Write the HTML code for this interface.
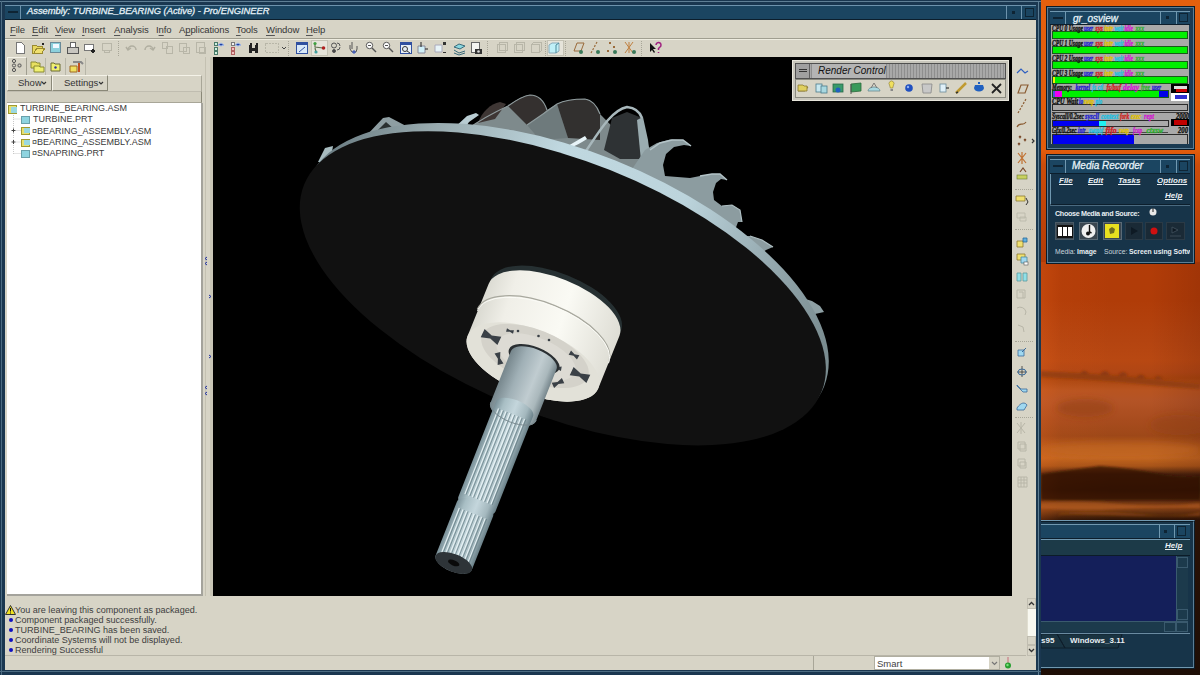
<!DOCTYPE html>
<html><head><meta charset="utf-8">
<style>
*{margin:0;padding:0;box-sizing:border-box}
html,body{width:1200px;height:675px;overflow:hidden;position:relative;font-family:"Liberation Sans",sans-serif;background:#000}
.a{position:absolute}
.t{position:absolute;white-space:nowrap;line-height:1}
#desk{left:1041px;top:0;width:159px;height:675px;background:linear-gradient(180deg,#d85c10 0%,#d45a12 40%,#c8601a 55%,#b65a1e 64%,#a85218 70%,#7a3410 76%,#3a1a08 80%,#2a1006 100%)}
#pe{left:0;top:0;width:1041px;height:675px;background:#1a3750}
.beige{background:#d7d4c6}
.menu{font-size:9.5px;letter-spacing:-0.1px;color:#363636;top:25px}
.menu u{text-decoration:underline;text-underline-offset:1.5px;text-decoration-color:#555}
.tree{font-size:9px;color:#3a3a3a}
.msg{font-size:9.05px;color:#3e3e3e;left:15px}
.bul{position:absolute;left:9px;width:4px;height:4px;border-radius:2px;background:#1010c0}
.mm{font-size:8px;font-style:italic;font-weight:bold;color:#e8eef2;text-decoration:underline}
.sep{position:absolute;width:1px;border-left:1px dotted #a8a698}
</style></head><body>
<div id="pe" class="a"></div>
<!-- outer frame highlight lines -->
<div class="a" style="left:0;top:1px;width:1041px;height:1px;background:#5f7f95"></div>
<div class="a" style="left:1px;top:1px;width:1px;height:674px;background:#4c6c82"></div>
<div class="a" style="left:1038px;top:1px;width:1px;height:674px;background:#5f7f95"></div>
<div class="a" style="left:0;top:671px;width:1041px;height:1px;background:#4c6c82"></div>
<!-- title bar -->
<div class="a" style="left:5px;top:5px;width:1031px;height:15px;background:#1b4561;border-top:1px solid #6d93ad;border-bottom:1px solid #0c1e2c"></div>
<div class="a" style="left:20px;top:5px;width:1px;height:14px;background:#6d93ad"></div>
<div class="a" style="left:8px;top:11px;width:10px;height:2px;background:#0e2434"></div>
<div class="a" style="left:1006px;top:5px;width:1px;height:14px;background:#6d93ad"></div>
<div class="a" style="left:1021px;top:5px;width:1px;height:14px;background:#6d93ad"></div>
<div class="a" style="left:1012px;top:11px;width:3px;height:3px;background:#0e2434"></div>
<div class="a" style="left:1025px;top:8px;width:9px;height:9px;border:1px solid #0e2434"></div>
<div class="t" style="left:27px;top:7px;font-size:9.35px;font-style:italic;color:#f2f8fc;-webkit-text-stroke:0.3px #dfeaf2">Assembly: TURBINE_BEARING (Active) - Pro/ENGINEER</div>
<!-- client -->
<div class="a beige" style="left:5px;top:20px;width:1031px;height:650px"></div>
<!-- menubar -->
<div class="t menu" style="left:10px"><u>F</u>ile</div>
<div class="t menu" style="left:32px"><u>E</u>dit</div>
<div class="t menu" style="left:55px"><u>V</u>iew</div>
<div class="t menu" style="left:82px"><u>I</u>nsert</div>
<div class="t menu" style="left:114px"><u>A</u>nalysis</div>
<div class="t menu" style="left:156px">I<u>n</u>fo</div>
<div class="t menu" style="left:179px">A<u>p</u>plications</div>
<div class="t menu" style="left:236px"><u>T</u>ools</div>
<div class="t menu" style="left:266px"><u>W</u>indow</div>
<div class="t menu" style="left:306px"><u>H</u>elp</div>
<div class="a" style="left:5px;top:38px;width:1031px;height:1px;background:#a09e90"></div>
<div class="a" style="left:5px;top:39px;width:1031px;height:1px;background:#eeece0"></div>
<!-- toolbar -->
<div class="a" style="left:311px;top:40px;width:17px;height:16px;background:#e6e4da;border:1px solid #c4c2b4"></div>
<div class="a" style="left:547px;top:40px;width:17px;height:16px;background:#e6e4da;border:1px solid #c4c2b4"></div>
<svg class="a" style="left:0;top:39px" width="700" height="18" viewBox="0 39 700 18">
<g stroke-width="1" shape-rendering="crispEdges">
<path d="M16.5 42.5h5l3 3v8h-8z" fill="#fff" stroke="#777"/>
<path d="M32.5 45.5h4l1 1h5v7h-10z" fill="#e8d860" stroke="#9a8a30"/>
<path d="M34 53l3-5h8l-3 5z" fill="#f0e070" stroke="#9a8a30"/>
<circle cx="43" cy="44" r="1.5" fill="#222"/>
<rect x="50.5" y="42.5" width="10" height="10" fill="#8cd0dc" stroke="#6a8a98"/>
<rect x="52.5" y="43.5" width="6" height="4" fill="#f0f8ff" stroke="none"/>
<rect x="67.5" y="47.5" width="11" height="6" fill="#c8c6c0" stroke="#555"/>
<rect x="70.5" y="42.5" width="5" height="5" fill="#fff" stroke="#666"/>
<rect x="84.5" y="44.5" width="9" height="6" fill="#fff" stroke="#777"/>
<ellipse cx="93" cy="51" rx="1.8" ry="2.6" fill="#222"/>
<rect x="102.5" y="43.5" width="9" height="7" fill="none" stroke="#b8b6a8"/>
<rect x="104.5" y="50.5" width="5" height="2" fill="none" stroke="#b8b6a8"/>
</g>
<g fill="none" stroke="#b0aea0" stroke-width="1.5">
<path d="M128 50a4 4 0 1 1 8 0" /><path d="M126 47l2 3 3-2"/>
<path d="M145 50a4 4 0 1 1 8 0" /><path d="M155 47l-2 3-3-2"/>
</g>
<g fill="none" stroke="#b8b6a8" stroke-width="1" shape-rendering="crispEdges">
<rect x="162.5" y="42.5" width="5" height="6"/><rect x="166.5" y="46.5" width="6" height="7"/>
<rect x="179.5" y="43.5" width="7" height="8"/><rect x="183.5" y="47.5" width="6" height="6"/>
<rect x="196.5" y="42.5" width="8" height="10"/><rect x="199.5" y="47.5" width="6" height="6"/>
<rect x="265.5" y="43.5" width="13" height="9" stroke-dasharray="2 1"/>
<rect x="497.5" y="44.5" width="8" height="8"/><rect x="499.5" y="42.5" width="8" height="8"/>
<rect x="514.5" y="44.5" width="8" height="8"/><rect x="516.5" y="42.5" width="8" height="8"/>
<rect x="531.5" y="44.5" width="8" height="8"/><path d="M531.5 44.5l2-2h8v8l-2 2"/>
</g>
<g shape-rendering="crispEdges">
<rect x="214.5" y="42.5" width="3" height="3" fill="#d0f0e0" stroke="#4a7a6a"/><rect x="214.5" y="47.5" width="3" height="3" fill="#d0f0e0" stroke="#4a7a6a"/><rect x="214.5" y="51.5" width="3" height="3" fill="#d0f0e0" stroke="#4a7a6a"/>
<rect x="231.5" y="42.5" width="3" height="3" fill="#f0f0f0" stroke="#7a7a7a"/><rect x="231.5" y="47.5" width="3" height="3" fill="#f0c0c0" stroke="#b06060"/><rect x="231.5" y="51.5" width="3" height="3" fill="#f0c0c0" stroke="#b06060"/>
</g>
<path d="M218 45l3-2 3 2-3 1zM235 45l3-2 3 2-3 1z" fill="#2040a0" stroke="#a0b8e8" stroke-width="1"/>
<path d="M249 45h3v8h-3zM255 45h3v8h-3zM250 43h2v2h-2zM256 43h2v2h-2zM252 48h3v3h-3z" fill="#222"/>
<path d="M282 47l2 2 2-2" fill="none" stroke="#444" stroke-width="1"/>
<path d="M284 47l2 2 2-2" fill="none" stroke="#444" stroke-width="0"/>
<rect x="296.5" y="42.5" width="11" height="11" fill="#d8e8f8" stroke="#3050a0" shape-rendering="crispEdges"/>
<rect x="297" y="43" width="10" height="2" fill="#3050a0"/>
<path d="M299 52l6-5" stroke="#3050a0" stroke-width="1"/>
<path d="M315 44v3l8 1M315 48l1 4" stroke="#607050" stroke-width="1.2" fill="none"/>
<circle cx="315" cy="43.5" r="1.6" fill="#40a040"/><circle cx="323.5" cy="48" r="1.8" fill="#b02020"/><circle cx="316" cy="52" r="1.6" fill="#40a0a0"/>
<g fill="none" stroke="#555" stroke-width="1">
<circle cx="334" cy="45.5" r="2.5"/><path d="M337 43a3 3 0 0 1 3 3M340 47a3 3 0 0 1-3 3"/><circle cx="334" cy="51" r="1.5" fill="#444"/>
<path d="M352 42v7M350 45v4l2 3h4l1-3v-3" /><path d="M354 50v4M352 52h4" stroke="#3050c0"/>
<circle cx="369.5" cy="45.5" r="3.2" fill="#fff"/><path d="M372 48l4 4" stroke-width="1.5"/><path d="M368 45.5h3"/>
<circle cx="386.5" cy="45.5" r="3.2" fill="#fff"/><path d="M389 48l4 4" stroke-width="1.5"/><path d="M385 45.5h3"/>
</g>
<rect x="400.5" y="42.5" width="11" height="11" fill="#e8f0f8" stroke="#3050a0" shape-rendering="crispEdges"/>
<rect x="401" y="43" width="10" height="2" fill="#3050a0"/>
<circle cx="405" cy="49" r="2.5" fill="none" stroke="#333"/><path d="M407 51l3 2" stroke="#333"/>
<path d="M418 46h7v7h-7z" fill="#d0f0f8" stroke="#889"/><path d="M421 42v5M425 49h3" stroke="#222"/>
<path d="M435 45h7v7h-7z" fill="#e8f4f8" stroke="#aab"/><path d="M443 42h3v3h-3zM443 52h3v1h-3z" fill="#333"/>
<path d="M454 47l5-3 6 2-5 3z" fill="#8cd8e0" stroke="#3a6a7a"/><path d="M454 50l5 3 6-2M454 53l5 2 6-2" fill="none" stroke="#3a6a7a"/>
<rect x="471.5" y="42.5" width="8" height="10" fill="#f4f4f0" stroke="#666" shape-rendering="crispEdges"/><rect x="475" y="49" width="7" height="5" fill="#333"/><circle cx="478.5" cy="51.5" r="1.3" fill="#ddd"/>
<path d="M549 45l3-2h7v8l-3 2h-7z" fill="#c0f0f8" stroke="#8ab"/><path d="M556 45v8M556 45l3-2" stroke="#4a8a9a" fill="none"/>
<path d="M574 51l3-8h7l-3 8z" fill="none" stroke="#9a6a3a" stroke-width="1"/><circle cx="581" cy="52" r="2" fill="#3a7a5a"/>
<path d="M591 53l6-11" stroke="#9a6a3a" stroke-dasharray="2 1.5" stroke-width="1.2"/><circle cx="598" cy="52" r="2" fill="#3a7a5a"/>
<path d="M609 42l2 2m0-2l-2 2M613 46l2 2m0-2l-2 2M607 50l2 2m0-2l-2 2" stroke="#9a6a3a" stroke-width="1"/><circle cx="615" cy="52" r="2" fill="#3a7a5a"/>
<path d="M625 42l8 11M633 42l-8 11M629 42v11" stroke="#c08040" stroke-width="1"/><circle cx="634" cy="52" r="2" fill="#3a7a5a"/>
<path d="M650 43v9l2-2 2 3 1-1-2-3h3z" fill="#111"/>
<path d="M656 45a2.5 2.5 0 1 1 4 2l-1.5 1.5v1.5M658.5 52v1" fill="none" stroke="#a02080" stroke-width="1.5"/>
</svg>
<div class="sep" style="left:118px;top:41px;height:15px"></div>
<div class="sep" style="left:288px;top:41px;height:15px"></div>
<div class="sep" style="left:487px;top:41px;height:15px"></div>
<div class="sep" style="left:545px;top:41px;height:15px"></div>
<div class="sep" style="left:565px;top:41px;height:15px"></div>
<div class="sep" style="left:641px;top:41px;height:15px"></div>

<!-- black viewport -->
<div class="a" style="left:213px;top:57px;width:799px;height:539px;background:#000"></div>
<!-- scene -->
<svg class="a" style="left:213px;top:57px" width="799" height="539" viewBox="213 57 799 539">
<defs>
<linearGradient id="rimg" x1="300" y1="0" x2="830" y2="0" gradientUnits="userSpaceOnUse">
<stop offset="0" stop-color="#6e8086"/><stop offset="0.15" stop-color="#96a8ac"/><stop offset="0.4" stop-color="#c0d8e0"/><stop offset="0.65" stop-color="#bcd4dc"/><stop offset="0.85" stop-color="#94a8ae"/><stop offset="1" stop-color="#7a8c90"/></linearGradient>
<linearGradient id="brg" x1="467" y1="300" x2="620" y2="350" gradientUnits="userSpaceOnUse">
<stop offset="0" stop-color="#cfcfc6"/><stop offset="0.25" stop-color="#f0efe8"/><stop offset="0.6" stop-color="#fafaf4"/><stop offset="1" stop-color="#dcdbd2"/></linearGradient>
<linearGradient id="shg" gradientUnits="userSpaceOnUse" x1="0" y1="0" x2="1" y2="0">
<stop offset="0" stop-color="#3e4a50"/><stop offset="0.25" stop-color="#8aa0a8"/><stop offset="0.45" stop-color="#b8ccd2"/><stop offset="0.75" stop-color="#8a9ea4"/><stop offset="1" stop-color="#4a5a60"/></linearGradient>
</defs>

<path d="M318 162L325 148L333 146L332 152L326 162Z" fill="#a8bcc0"/>
<path d="M366 136L383 118L389 117L408 127L396 133Z" fill="#8e9ea2"/>
<path d="M377 131L386 122L394 129Z" fill="#2a3030"/>
<path d="M453 129L467 116L476 113L479 115L469 122L463 131Z" fill="#b8ccd2"/>
<path d="M466 130C480 120 495 112 508 106C515 101 522 96 530 95C538 95 544 101 547 110L557 104C565 100 575 99 585 99C592 100 597 106 600 114L650 165L640 205L470 140Z" fill="#7e8a8c"/>
<path d="M478 123C482 112 490 104 500 102L506 104L495 119Z" fill="#3e3634"/>
<path d="M508 106C515 101 522 96 530 95C538 95 544 101 547 110L543 114L527 125Z" fill="#34302f"/>
<path d="M527 125L543 114L557 104L568 138L540 140Z" fill="#6e7a7c"/>
<path d="M557 104C565 100 575 99 585 99C592 100 597 106 600 114L600 140L568 138Z" fill="#32302f"/>
<path d="M466 130C480 120 495 112 508 106C515 101 522 96 530 95C538 95 544 101 547 110" fill="none" stroke="#8e9a9c" stroke-width="1.2"/>
<path d="M527 125L543 114L557 104C565 100 575 99 585 99C592 100 597 106 600 114" fill="none" stroke="#8e9a9c" stroke-width="1.2"/>
<path d="M612 118L627 112L642 118L645 159L620 159L604 150Z" fill="#2e3234"/>
<path d="M637 120L643 117L648 140L651 163L641 161Z" fill="#9aacb0"/>
<path d="M586 151C600 130 612 110 627 107C636 108 640 112 642 118" fill="none" stroke="#a8b8bc" stroke-width="2.5"/>
<path d="M568 146C574 142 580 139 585 136L587 139C581 143 575 146 570 148Z" fill="#e8f4f8"/>
<path d="M628 175L645 150L657 143L670 139.5L683 140L691 146L684 145L674 147L666 154L663 165L665 176L690 178L700 176L712 174L720 174L727 180L721 179L716 183L713 192L714 200L722 206L732 205L740 210L742 222L738 222L735 230L737 236L750 236L762 240L773 247L766 250L760 254L800 300L700 240L640 205Z" fill="#8c9ca0"/>
<path d="M650 150L660 143L672 140L683 140L691 146" fill="none" stroke="#b4c4c8" stroke-width="1.5"/>
<path d="M700 176L712 174L720 174L727 180" fill="none" stroke="#b4c4c8" stroke-width="1.3"/>
<path d="M722 206L732 205L740 210L742 222" fill="none" stroke="#b0c0c4" stroke-width="1.2"/>
<path d="M750 236L762 240L773 247" fill="none" stroke="#b0c0c4" stroke-width="1.2"/>
<path d="M790 300L802 298L812 301L820 306L824 312L815 314L806 318Z" fill="#8ea0a4"/>
<path d="M818 358L823 361L828 369L820 370Z" fill="#90a6ac"/>

<ellipse cx="566.3" cy="283.3" rx="277.7" ry="132.3" transform="rotate(21.8 566.3 283.3)" fill="url(#rimg)"/>
<ellipse cx="562.8" cy="288.3" rx="278.7" ry="127.3" transform="rotate(21.8 562.8 288.3)" fill="#111111"/>
<ellipse cx="556.0" cy="305.0" rx="70.0" ry="31.9" transform="rotate(21.8 556.0 305.0)" fill="#263032"/>
<path d="M488.6 283.9A70.4 32.1 21.8 0 1 619.4 336.1L598.4 388.1A70.4 32.1 21.8 0 1 467.6 335.9Z" fill="url(#brg)"/>
<path d="M477.4 309.3A70.6 32.2 21.8 0 1 608.6 361.7" fill="none" stroke="#a8a89e" stroke-width="1.3"/>
<path d="M477.4 310.8A70.6 32.2 21.8 0 1 608.6 363.2" fill="none" stroke="#fbfbf6" stroke-width="1"/>
<ellipse cx="533.0" cy="362.0" rx="70.4" ry="32.1" transform="rotate(21.8 533.0 362.0)" fill="#e2e1d8"/>
<ellipse cx="535.0" cy="356.0" rx="57.0" ry="26.0" transform="rotate(21.8 535.0 356.0)" fill="#d4d2ca"/>
<ellipse cx="536.0" cy="357.0" rx="42.0" ry="19.2" transform="rotate(21.8 536.0 357.0)" fill="#dddbd4"/>
<path d="M-8 -4L0 -1.5L8 -4L8 4L0 1.5L-8 4Z" fill="#3a4046" transform="translate(491 337) rotate(25) scale(1.15)"/>
<path d="M-8 -4L0 -1.5L8 -4L8 4L0 1.5L-8 4Z" fill="#3a4046" transform="translate(499 358.5) rotate(75) scale(0.75)"/>
<path d="M-8 -4L0 -1.5L8 -4L8 4L0 1.5L-8 4Z" fill="#3a4046" transform="translate(510 331) rotate(15) scale(0.45)"/>
<path d="M-8 -4L0 -1.5L8 -4L8 4L0 1.5L-8 4Z" fill="#3a4046" transform="translate(574 355) rotate(30) scale(0.6)"/>
<path d="M-8 -4L0 -1.5L8 -4L8 4L0 1.5L-8 4Z" fill="#3a4046" transform="translate(580 375) rotate(25) scale(1.15)"/>
<path d="M-8 -4L0 -1.5L8 -4L8 4L0 1.5L-8 4Z" fill="#3a4046" transform="translate(558 383) rotate(-25) scale(0.7)"/>
<path d="M-8 -4L0 -1.5L8 -4L8 4L0 1.5L-8 4Z" fill="#3a4046" transform="translate(557 368) rotate(10) scale(0.55)"/>
<circle cx="518" cy="331" r="1.3" fill="#3a4046"/>
<circle cx="538.5" cy="336" r="1.3" fill="#3a4046"/>
<circle cx="549" cy="340" r="1.3" fill="#3a4046"/>
<ellipse cx="534.1" cy="359.2" rx="27.0" ry="12.3" transform="rotate(21.8 534.1 359.2)" fill="#2a2f32"/>
<defs><linearGradient id="sg1" gradientUnits="userSpaceOnUse" x1="499.2" y1="380.8" x2="544.7" y2="399.0"><stop offset="0" stop-color="#76868c"/><stop offset="0.3" stop-color="#a0b0b6"/><stop offset="0.65" stop-color="#c0ccd0"/><stop offset="0.85" stop-color="#aab8bc"/><stop offset="1" stop-color="#76868c"/></linearGradient><linearGradient id="sg2" gradientUnits="userSpaceOnUse" x1="477.7" y1="447.6" x2="514.9" y2="462.4"><stop offset="0" stop-color="#7a9098"/><stop offset="0.2" stop-color="#a8bec4"/><stop offset="0.5" stop-color="#c4d6dc"/><stop offset="0.8" stop-color="#a4b8be"/><stop offset="1" stop-color="#6a8088"/></linearGradient><linearGradient id="sg3" gradientUnits="userSpaceOnUse" x1="447.0" y1="526.8" x2="483.2" y2="541.3"><stop offset="0" stop-color="#7a9098"/><stop offset="0.2" stop-color="#a8bec4"/><stop offset="0.5" stop-color="#c4d6dc"/><stop offset="0.8" stop-color="#a4b8be"/><stop offset="1" stop-color="#6a8088"/></linearGradient></defs>
<path d="M511.0 351.0A24.5 11.2 21.8 0 1 556.5 369.2L535.9 421.3A24.5 11.2 21.8 0 1 490.4 403.1Z" fill="url(#sg1)"/>
<path d="M496.1 401.1A20.0 9.1 21.8 0 1 533.2 415.9L495.4 511.7A20.0 9.1 21.8 0 1 458.3 496.9Z" fill="url(#sg2)"/>
<path d="M460.8 494.6A18.5 8.4 21.8 0 1 495.1 508.4L491.5 517.7A18.5 8.4 21.8 0 1 457.1 503.9Z" fill="url(#sg2)"/>
<path d="M456.9 501.7A19.5 8.9 21.8 0 1 493.1 516.2L471.8 570.1A19.5 8.9 21.8 0 1 435.6 555.6Z" fill="url(#sg3)"/>
<path d="M498.5 408.5L464.8 494.1" stroke="#eef8fa" stroke-width="1.1" opacity="0.9"/>
<path d="M499.9 409.1L466.1 494.6" stroke="#587078" stroke-width="0.9" opacity="0.7"/>
<path d="M459.3 508.0L441.6 552.7" stroke="#eef8fa" stroke-width="1.1" opacity="0.9"/>
<path d="M460.6 508.6L443.0 553.2" stroke="#587078" stroke-width="0.9" opacity="0.7"/>
<path d="M502.2 410.0L468.5 495.6" stroke="#eef8fa" stroke-width="1.1" opacity="0.9"/>
<path d="M503.6 410.6L469.9 496.1" stroke="#587078" stroke-width="0.9" opacity="0.7"/>
<path d="M463.0 509.5L445.3 554.1" stroke="#eef8fa" stroke-width="1.1" opacity="0.9"/>
<path d="M464.4 510.1L446.7 554.7" stroke="#587078" stroke-width="0.9" opacity="0.7"/>
<path d="M505.9 411.5L472.2 497.0" stroke="#eef8fa" stroke-width="1.1" opacity="0.9"/>
<path d="M507.3 412.0L473.6 497.6" stroke="#587078" stroke-width="0.9" opacity="0.7"/>
<path d="M466.7 511.0L449.1 555.6" stroke="#eef8fa" stroke-width="1.1" opacity="0.9"/>
<path d="M468.1 511.5L450.5 556.2" stroke="#587078" stroke-width="0.9" opacity="0.7"/>
<path d="M509.7 413.0L475.9 498.5" stroke="#eef8fa" stroke-width="1.1" opacity="0.9"/>
<path d="M511.1 413.5L477.3 499.1" stroke="#587078" stroke-width="0.9" opacity="0.7"/>
<path d="M470.4 512.5L452.8 557.1" stroke="#eef8fa" stroke-width="1.1" opacity="0.9"/>
<path d="M471.8 513.0L454.2 557.7" stroke="#587078" stroke-width="0.9" opacity="0.7"/>
<path d="M513.4 414.5L479.6 500.0" stroke="#eef8fa" stroke-width="1.1" opacity="0.9"/>
<path d="M514.8 415.0L481.0 500.6" stroke="#587078" stroke-width="0.9" opacity="0.7"/>
<path d="M474.1 514.0L456.5 558.6" stroke="#eef8fa" stroke-width="1.1" opacity="0.9"/>
<path d="M475.5 514.5L457.9 559.2" stroke="#587078" stroke-width="0.9" opacity="0.7"/>
<path d="M517.1 415.9L483.3 501.5" stroke="#eef8fa" stroke-width="1.1" opacity="0.9"/>
<path d="M518.5 416.5L484.7 502.1" stroke="#587078" stroke-width="0.9" opacity="0.7"/>
<path d="M477.8 515.4L460.2 560.1" stroke="#eef8fa" stroke-width="1.1" opacity="0.9"/>
<path d="M479.2 516.0L461.6 560.6" stroke="#587078" stroke-width="0.9" opacity="0.7"/>
<path d="M520.8 417.4L487.0 503.0" stroke="#eef8fa" stroke-width="1.1" opacity="0.9"/>
<path d="M522.2 418.0L488.4 503.5" stroke="#587078" stroke-width="0.9" opacity="0.7"/>
<path d="M481.5 516.9L463.9 561.6" stroke="#eef8fa" stroke-width="1.1" opacity="0.9"/>
<path d="M482.9 517.5L465.3 562.1" stroke="#587078" stroke-width="0.9" opacity="0.7"/>
<path d="M524.5 418.9L490.8 504.5" stroke="#eef8fa" stroke-width="1.1" opacity="0.9"/>
<path d="M525.9 419.5L492.1 505.0" stroke="#587078" stroke-width="0.9" opacity="0.7"/>
<path d="M485.2 518.4L467.6 563.1" stroke="#eef8fa" stroke-width="1.1" opacity="0.9"/>
<path d="M486.6 519.0L469.0 563.6" stroke="#587078" stroke-width="0.9" opacity="0.7"/>
<path d="M536.3 420.4A24.5 11.2 21.8 0 1 490.8 402.2" fill="none" stroke="#7a8a90" stroke-width="1"/>
<ellipse cx="453.7" cy="562.9" rx="19.5" ry="8.9" transform="rotate(21.8 453.7 562.9)" fill="#2e3438"/>
<ellipse cx="453.7" cy="562.9" rx="6.0" ry="2.7" transform="rotate(21.8 453.7 562.9)" fill="#0a0a0a"/>
</svg>
<!-- /scene -->
<!-- rc -->
<!-- render control -->
<div class="a" style="left:792px;top:60px;width:217px;height:41px;background:#c8c6bc;border:1px solid #e8e6dc"></div>
<div class="a" style="left:795px;top:63px;width:211px;height:16px;background:repeating-linear-gradient(90deg,#8e8e8e 0,#8e8e8e 1px,#a8a8a8 1px,#a8a8a8 3px);border:1px solid #505050"></div>
<div class="a" style="left:796px;top:64px;width:14px;height:14px;background:#a0a0a0;border-right:1px solid #606060"></div>
<div class="a" style="left:799px;top:69px;width:8px;height:3px;border-top:1px solid #333;border-bottom:1px solid #333"></div>
<div class="a" style="left:812px;top:64px;width:74px;height:14px;background:#b4b4b4"></div>
<div class="t" style="left:818px;top:66px;font-size:10px;font-style:italic;color:#111">Render Control</div>
<div class="a" style="left:795px;top:79px;width:211px;height:19px;background:#d7d4c6;border:1px solid #8a8a80"></div>
<svg class="a" style="left:795px;top:79px" width="211" height="19" viewBox="795 79 211 19">
<path d="M798 91h7l3-4h-7z" fill="#e8d860" stroke="#8a7a30" stroke-width="0.8"/><path d="M798 85h5l1 1h3v5h-9z" fill="#e0d060" stroke="#8a7a30" stroke-width="0.8"/>
<rect x="816" y="84" width="6" height="8" fill="#c8e8f0" stroke="#4a7a8a" stroke-width="0.8"/><rect x="821" y="86" width="6" height="7" fill="#a8d8e0" stroke="#4a7a8a" stroke-width="0.8"/>
<rect x="833" y="84" width="10" height="8" fill="#3a9a6a" stroke="#2a6a4a" stroke-width="0.8"/><circle cx="838" cy="90" r="2.5" fill="#2060c0"/>
<path d="M851 84l10-1v8l-10 1z" fill="#3a9a5a" stroke="#2a6a3a" stroke-width="0.8"/><path d="M851 84v10" stroke="#555" stroke-width="1"/>
<path d="M868 91a6 4 0 0 1 12 0z" fill="#a8d8e0" stroke="#6a8a90" stroke-width="0.8"/><path d="M874 83l-3 5M874 83l3 5" stroke="#666" stroke-width="0.8"/>
<path d="M889.5 85a2.5 2.5 0 1 1 4 0l-0.8 3h-2.4z" fill="#f0e060" stroke="#8a7a30" stroke-width="0.6"/><rect x="890.5" y="89" width="2.5" height="2" fill="#888"/>
<circle cx="909" cy="88" r="3.8" fill="#2050c0"/><circle cx="908" cy="87" r="1.2" fill="#90b0f0"/>
<path d="M922 84h10l-1 9h-8z" fill="#c8c8c8" stroke="#888" stroke-width="0.8"/>
<rect x="940" y="84" width="6" height="8" fill="#e0f0f8" stroke="#6a8a9a" stroke-width="0.8"/><path d="M946 88l3 0" stroke="#333" stroke-width="1.2"/>
<path d="M956 93l10-10" stroke="#c09a30" stroke-width="2.5"/><path d="M956 93l2-1" stroke="#333" stroke-width="1.5"/>
<path d="M974 88a5 3.5 0 0 0 10 0l-1-3h-8z" fill="#2060c0"/><path d="M979 84v-2" stroke="#2060c0" stroke-width="2"/>
<path d="M992 84l9 9M1001 84l-9 9" stroke="#222" stroke-width="1.8"/>
</svg>
<!-- right toolbar -->
<svg class="a" style="left:1013px;top:57px" width="23" height="440" viewBox="1013 57 23 440">
<g fill="none" stroke-width="1.2">
<path d="M1017 73l4-4 4 4 3-2" stroke="#3060c0"/>
<path d="M1018 93l3-8h7l-3 8z" stroke="#8a5a30"/>
<path d="M1018 113l8-14" stroke="#8a5a30" stroke-dasharray="2 1.5"/>
<path d="M1017 127c3-6 6 0 9-5" stroke="#8a5a30"/>
<path d="M1019 136l2 2m0-2l-2 2M1024 139l2 2m0-2l-2 2M1018 143l2 2m0-2l-2 2" stroke="#7a4a2a"/>
<path d="M1032 139l2 2-2 2" stroke="#333"/>
<path d="M1018 153l8 10M1026 153l-8 10M1022 152v12" stroke="#c07030"/>
<path d="M1020 172l3-4 3 4" stroke="#7a4a2a"/>
</g>
<rect x="1017" y="175" width="10" height="4" fill="#c8d060" stroke="#6a7a30" stroke-width="0.6"/>
<path d="M1016 196h9v5h-9z" fill="#f0e070" stroke="#8a7a30" stroke-width="0.8"/><path d="M1026 198l2 4-2 3" stroke="#333" fill="none"/>
<path d="M1017 213h8v5h-8zM1020 217h6v4h-6z" fill="none" stroke="#b8b6a8" stroke-width="0.8"/>
<path d="M1017 241h6v6h-6z" fill="#f0e070" stroke="#8a7a30" stroke-width="0.8"/><path d="M1023 238h4v4h-4z" fill="#60b0e0" stroke="#2a6a9a" stroke-width="0.8"/>
<path d="M1017 254h8v6h-8z" fill="#f0e070" stroke="#8a7a30" stroke-width="0.8"/><path d="M1021 257h6v6h-6z" fill="#a0d8f0" stroke="#4a8aa0" stroke-width="0.8"/><rect x="1024" y="262" width="4" height="3" fill="#fff" stroke="#555" stroke-width="0.6"/>
<path d="M1017 273h4v8h-4zM1023 273h4v8h-4z" fill="#90e0e8" stroke="#5a9aa0" stroke-width="0.8"/>
<g fill="none" stroke="#b8b6a8" stroke-width="1">
<path d="M1017 290h8v8h-8zM1019 292h4v6"/>
<path d="M1017 308a6 6 0 0 1 9 4l-1 3"/>
<path d="M1018 325l5 2 1 5"/>
<path d="M1017 423l8 10M1025 423l-8 10M1021 422v12"/>
<path d="M1018 442h7v7h-7zM1020 444h6v7h-6z"/>
<path d="M1018 459h7v7h-7zM1020 462h6v6h-6z"/>
<path d="M1018 477h9v10h-9zM1018 480h9M1018 483h9M1021 477v10M1024 477v10"/>
</g>
<path d="M1018 350h6v6h-6z" fill="#a0d8f0" stroke="#3a6a9a" stroke-width="0.8"/><path d="M1022 352l4-4" stroke="#3a6a9a" stroke-width="1"/>
<path d="M1022 366v11M1017 372h10" stroke="#333" stroke-width="0.8"/><ellipse cx="1022" cy="372" rx="4" ry="3" fill="none" stroke="#3a6a9a"/>
<path d="M1017 385l4 4h6v3h-4l-6-6z" fill="#a0d8f0" stroke="#3a6a9a" stroke-width="0.8"/>
<path d="M1017 408c4-6 8-6 10-3l-3 5h-7z" fill="#a0d8f0" stroke="#3a6a9a" stroke-width="0.8"/>
</svg>
<div class="sep" style="left:1015px;top:189px;width:18px;height:1px;border-left:none;border-top:1px dotted #a8a698"></div>
<div class="sep" style="left:1015px;top:229px;width:18px;height:1px;border-left:none;border-top:1px dotted #a8a698"></div>
<div class="sep" style="left:1015px;top:341px;width:18px;height:1px;border-left:none;border-top:1px dotted #a8a698"></div>
<div class="sep" style="left:1015px;top:417px;width:18px;height:1px;border-left:none;border-top:1px dotted #a8a698"></div>

<!-- /rc -->
<!-- left panel tabs -->
<div class="a" style="left:7px;top:57px;width:20px;height:18px;border-left:1px solid #f4f2e8;border-top:1px solid #f4f2e8;border-right:1px solid #a09e90"></div>
<div class="a" style="left:28px;top:58px;width:18px;height:17px;border-right:1px solid #b8b6a8"></div>
<div class="a" style="left:47px;top:58px;width:19px;height:17px;border-right:1px solid #b8b6a8"></div>
<div class="a" style="left:67px;top:58px;width:19px;height:17px;border-right:1px solid #b8b6a8"></div>
<svg class="a" style="left:0;top:55px" width="100" height="22" viewBox="0 55 100 22">
<g fill="none" stroke="#555" stroke-width="1">
<circle cx="14" cy="61" r="1.6"/><circle cx="14" cy="65.5" r="1.6"/><circle cx="14" cy="70" r="1.6"/><rect x="18" y="64" width="3" height="3" rx="1"/>
</g>
<path d="M31 62h5l1 1h3v5h-9z" fill="#e8e060" stroke="#8a8a30"/>
<path d="M34 66h5l1 1h4v5h-10z" fill="#f0f070" stroke="#8a8a30"/>
<path d="M51 63h3l1 1h5v7h-9z" fill="#f0f070" stroke="#6a6a30"/>
<circle cx="55.5" cy="67.5" r="1.2" fill="#3030a0"/>
<path d="M70 66h7v6h-7z" fill="#f0e060" stroke="#a06a20"/>
<path d="M73 62h8l2 2" fill="none" stroke="#888" stroke-width="2"/>
<path d="M79 63v9" stroke="#c05020" stroke-width="2"/>
</svg>
<!-- Show / Settings -->
<div class="a" style="left:7px;top:75px;width:45px;height:16px;border-top:1px solid #f4f2e8;border-left:1px solid #f4f2e8;border-right:1px solid #8a8878;border-bottom:1px solid #8a8878"></div>
<div class="a" style="left:52px;top:75px;width:56px;height:16px;border-top:1px solid #f4f2e8;border-left:1px solid #f4f2e8;border-right:1px solid #8a8878;border-bottom:1px solid #8a8878"></div>
<div class="a" style="left:108px;top:75px;width:94px;height:16px;border-top:1px solid #f4f2e8;border-right:1px solid #a8a698"></div>
<div class="t" style="left:18px;top:78px;font-size:9.5px;color:#333">Show</div>
<div class="t" style="left:64px;top:78px;font-size:9.5px;color:#333">Settings</div>
<svg class="a" style="left:40px;top:80px" width="70" height="8"><path d="M2 2l2 2 2-2M59 2l2 2 2-2" fill="none" stroke="#333" stroke-width="1.2"/></svg>
<!-- header -->
<div class="a" style="left:7px;top:91px;width:195px;height:12px;background:#d2cfc0;border-top:1px solid #c0bdb0;border-bottom:1px solid #a8a698;border-right:1px solid #8a8878"></div>
<!-- tree -->
<div class="a" style="left:7px;top:103px;width:196px;height:493px;background:#fff;border-right:2px solid #a4a39c;border-bottom:2px solid #a4a39c"></div>
<svg class="a" style="left:0;top:100px" width="40" height="60" viewBox="0 100 40 60">
<path d="M13.5 113v41M13.5 119h7M13.5 130.5h7M13.5 142h7M13.5 153.5h7" stroke="#c8c8c8" stroke-width="1" stroke-dasharray="1 1" fill="none"/>
<rect x="11" y="128" width="5" height="5" fill="#fff"/><rect x="11" y="139.5" width="5" height="5" fill="#fff"/>
<path d="M11.5 130.5h4M13.5 128.5v4M11.5 142h4M13.5 140v4" stroke="#444" stroke-width="1"/>
<g shape-rendering="crispEdges">
<path d="M8.5 105.5h8v8h-8z" fill="#e8e070" stroke="#a09a30"/><path d="M10.5 106.5h6v6h-6z" fill="#9ad8e0"/>
<path d="M21.5 116.5h8v7h-8z" fill="#8ed4e0" stroke="#6aa0aa"/>
<path d="M21.5 127.5h8v7h-8z" fill="#e8e070" stroke="#a09a30"/><path d="M23.5 127.5h6v5h-6z" fill="#9ad8e0"/>
<path d="M21.5 139.5h8v7h-8z" fill="#e8e070" stroke="#a09a30"/><path d="M23.5 139.5h6v5h-6z" fill="#9ad8e0"/>
<path d="M21.5 150.5h8v7h-8z" fill="#8ed4e0" stroke="#6aa0aa"/>
</g>
</svg>
<div class="t tree" style="left:20px;top:103.5px">TURBINE_BEARING.ASM</div>
<div class="t tree" style="left:33px;top:115px">TURBINE.PRT</div>
<div class="t tree" style="left:32px;top:126.5px">¤BEARING_ASSEMBLY.ASM</div>
<div class="t tree" style="left:32px;top:138px">¤BEARING_ASSEMBLY.ASM</div>
<div class="t tree" style="left:32px;top:149px">¤SNAPRING.PRT</div>
<!-- sash -->
<div class="a" style="left:205px;top:57px;width:1px;height:539px;background:#c4c1b2"></div>
<div class="a" style="left:210px;top:57px;width:3px;height:539px;background:#c8c5b6"></div>
<svg class="a" style="left:203px;top:250px" width="10" height="150" viewBox="203 250 10 150">
<path d="M207 257l-2 1.5 2 1.5M207 262l-2 1.5 2 1.5M209 295l2 1.5-2 1.5M209 355l2 1.5-2 1.5M207 386l-2 1.5 2 1.5M207 392l-2 1.5 2 1.5" fill="none" stroke="#2030a0" stroke-width="1"/>
</svg>
<!-- message area -->
<svg class="a" style="left:5px;top:604px" width="12" height="12" viewBox="5 603 12 12"><path d="M10.5 604.5l5 9h-10z" fill="#f0e020" stroke="#333" stroke-width="1"/><path d="M10.5 607v3.5M10.5 611.5v1" stroke="#111" stroke-width="1"/></svg>
<div class="t msg" style="top:605.5px">You are leaving this component as packaged.</div>
<div class="bul" style="top:618px"></div><div class="t msg" style="top:615.5px">Component packaged successfully.</div>
<div class="bul" style="top:628px"></div><div class="t msg" style="top:625.5px">TURBINE_BEARING has been saved.</div>
<div class="bul" style="top:638px"></div><div class="t msg" style="top:635.5px">Coordinate Systems will not be displayed.</div>
<div class="bul" style="top:648px"></div><div class="t msg" style="top:645.5px">Rendering Successful</div>
<div class="a" style="left:5px;top:655px;width:1021px;height:1px;background:#b8b5a8"></div>
<!-- scrollbar -->
<div class="a" style="left:1027px;top:598px;width:9px;height:58px;background:#f8f8f0;border-left:1px solid #e0ded0"></div>
<div class="a" style="left:1027px;top:598px;width:9px;height:11px;background:#d7d4c6;border:1px solid #c0bdb0"></div>
<div class="a" style="left:1027px;top:636px;width:9px;height:9px;background:#d7d4c6;border:1px solid #c0bdb0"></div>
<div class="a" style="left:1027px;top:645px;width:9px;height:11px;background:#d7d4c6;border:1px solid #c0bdb0"></div>
<svg class="a" style="left:1027px;top:598px" width="10" height="58" viewBox="1027 598 10 58"><path d="M1029 605l2.5-2.5 2.5 2.5M1029 649l2.5 2.5 2.5-2.5" fill="none" stroke="#333" stroke-width="1.3"/></svg>
<!-- status bar -->
<div class="a" style="left:813px;top:656px;width:1px;height:14px;background:#a8a698"></div>
<div class="a" style="left:874px;top:656px;width:126px;height:14px;background:#fff;border:1px solid #b0aea0"></div>
<div class="a" style="left:989px;top:657px;width:10px;height:12px;background:#d7d4c6"></div>
<svg class="a" style="left:989px;top:657px" width="30" height="14" viewBox="989 657 30 14"><path d="M992 662l2.5 2.5 2.5-2.5" fill="none" stroke="#777" stroke-width="1.2"/>
<rect x="1007" y="657" width="2" height="6" fill="#d0a0a0"/><circle cx="1008" cy="665.5" r="3" fill="#28a030"/><circle cx="1007.5" cy="665" r="1.2" fill="#80e080"/></svg>
<div class="t" style="left:877px;top:658.5px;font-size:9.5px;color:#444">Smart</div>
<!-- desk -->
<!-- desktop bg -->
<div class="a" style="left:1041px;top:0;width:159px;height:675px;background:linear-gradient(180deg,#e4600e 0px,#e25c0c 150px,#cc4c0a 165px,#b23c08 262px,#b03c08 300px,#b44410 340px,#b84812 360px,#b04614 372px,#a8440e 378px,#b85420 390px,#b45426 400px,#a84c1e 420px,#9e4818 436px,#b45a1c 448px,#c06420 458px,#a85418 466px,#4a220c 474px,#361808 490px,#5a2a0e 500px,#94481a 507px,#6a3410 512px,#2a1206 520px,#1e0e06 675px)"></div>
<div class="a" style="left:1041px;top:262px;width:159px;height:258px;background:linear-gradient(90deg,rgba(255,110,30,0.22) 0px,rgba(255,110,30,0.06) 20px,rgba(0,0,0,0) 70px,rgba(0,0,0,0) 110px,rgba(40,0,0,0.12) 159px)"></div>
<svg class="a" style="left:1041px;top:340px" width="159" height="180" viewBox="1041 340 159 180">
<defs><filter id="bl" x="-20%" y="-50%" width="140%" height="200%"><feGaussianBlur stdDeviation="1.2"/></filter><filter id="bl2" x="-20%" y="-50%" width="140%" height="200%"><feGaussianBlur stdDeviation="3"/></filter></defs>
<g filter="url(#bl2)">
<ellipse cx="1085" cy="408" rx="28" ry="9" fill="#923e14" opacity="0.55"/>
<ellipse cx="1180" cy="425" rx="30" ry="10" fill="#94401a" opacity="0.5"/>
<ellipse cx="1120" cy="450" rx="80" ry="8" fill="#c86a24" opacity="0.45"/>
</g>
<g filter="url(#bl)">
<path d="M1041 371L1080 373L1120 376L1160 380L1200 384L1200 389L1160 386L1120 382L1080 379L1041 377Z" fill="#8a3a10" opacity="0.7"/>
<path d="M1080 374q4-7 9 0M1100 375q5-8 10 0M1118 376q5-8 10 0M1136 378q5-7 10 0M1154 379q4-6 9 0" fill="#7a3410" opacity="0.6"/>
<path d="M1041 474Q1070 470 1100 466Q1130 468 1160 474Q1185 478 1200 476L1200 500L1041 500Z" fill="#301606" opacity="0.75"/>
<path d="M1041 503Q1080 500 1120 504T1200 503L1200 508Q1160 506 1120 509T1041 508Z" fill="#b05a1c" opacity="0.6"/>
<path d="M1060 513Q1100 510 1140 514T1200 512L1200 516Q1150 517 1100 515T1060 516Z" fill="#a05018" opacity="0.5"/>
</g>
</svg>
<!-- gr_osview -->
<div class="a" style="left:1046px;top:6px;width:149px;height:144px;background:#1a3a52;border:1px solid #0c1c28"></div>
<div class="a" style="left:1047px;top:7px;width:147px;height:142px;border:1px solid #5a7e96"></div>
<div class="a" style="left:1050px;top:11px;width:140px;height:14px;background:#1b4561;border-top:1px solid #7098b0;border-bottom:1px solid #0c1e2c"></div>
<div class="a" style="left:1065px;top:11px;width:1px;height:13px;background:#7098b0"></div>
<div class="a" style="left:1160px;top:11px;width:1px;height:13px;background:#7098b0"></div>
<div class="a" style="left:1176px;top:11px;width:1px;height:13px;background:#7098b0"></div>
<div class="a" style="left:1053px;top:17px;width:10px;height:2px;background:#0e2434"></div>
<div class="a" style="left:1166px;top:16px;width:3px;height:3px;background:#0e2434"></div>
<div class="a" style="left:1179px;top:13px;width:9px;height:9px;border:1px solid #0e2434"></div>
<div class="t" style="left:1073px;top:13.5px;font-size:10px;font-style:italic;color:#f2f8fc;-webkit-text-stroke:0.3px #dfeaf2">gr_osview</div>
<div class="a" style="left:1051px;top:25px;width:138px;height:119px;background:#a9a9a9"></div>
<svg class="a" style="left:1051px;top:25px" width="138" height="119" viewBox="1051 25 138 119">

<g shape-rendering="crispEdges">
<rect x="1052" y="31" width="136" height="8" fill="#1a5a1a"/><rect x="1053" y="32" width="134" height="6" fill="#00f000"/>
<rect x="1052" y="46" width="136" height="8" fill="#1a5a1a"/><rect x="1053" y="47" width="134" height="6" fill="#00f000"/>
<rect x="1052" y="61" width="136" height="8" fill="#1a5a1a"/><rect x="1053" y="62" width="134" height="6" fill="#00f000"/>
<rect x="1052" y="76" width="136" height="8" fill="#1a5a1a"/><rect x="1053" y="77" width="134" height="6" fill="#00f000"/><rect x="1053" y="77" width="2" height="6" fill="#f0f000"/>
<rect x="1052" y="90" width="117" height="8" fill="#1a5a1a"/><rect x="1053" y="91" width="115" height="6" fill="#00f000"/>
<rect x="1053" y="91" width="2" height="6" fill="#5050e0"/><rect x="1055" y="91" width="7" height="6" fill="#f000f0"/><rect x="1159" y="91" width="9" height="6" fill="#0000e8"/>
<rect x="1171" y="84" width="18" height="9" fill="#000"/><rect x="1171" y="93" width="18" height="8" fill="#fff"/>
<rect x="1052" y="104" width="136" height="7" fill="#2a2a2a"/><rect x="1053" y="105" width="134" height="5" fill="#a9a9a9"/>
<rect x="1052" y="112" width="136" height="1" fill="#3a3a3a"/>
<rect x="1052" y="120" width="117" height="7" fill="#2a2a2a"/><rect x="1053" y="121" width="115" height="5" fill="#a9a9a9"/>
<rect x="1053" y="121" width="46" height="5" fill="#0000f0"/><rect x="1099" y="121" width="7" height="5" fill="#20f0f0"/>
<rect x="1171" y="119" width="18" height="7" fill="#000"/><rect x="1174" y="120" width="13" height="5" fill="#c00000"/>
<rect x="1052" y="134" width="136" height="10" fill="#2a2a2a"/><rect x="1053" y="135" width="134" height="9" fill="#a9a9a9"/>
<rect x="1053" y="135" width="81" height="9" fill="#0000f0"/>
<rect x="1052" y="132" width="116" height="1" fill="#4a4a4a"/>
</g>
<g font-family="Liberation Serif" font-style="italic" font-weight="bold" font-size="8.2">
<text x="1052" y="30.5" textLength="31" lengthAdjust="spacingAndGlyphs" fill="#111" stroke="#111" stroke-width="0.35">CPU 0 Usage</text>
<text x="1084" y="30.5" textLength="9" lengthAdjust="spacingAndGlyphs" fill="#2020d0" stroke="#2020d0" stroke-width="0.35">user</text>
<text x="1095.5" y="30.5" textLength="7.5" lengthAdjust="spacingAndGlyphs" fill="#d02020" stroke="#d02020" stroke-width="0.35">sys</text>
<text x="1104.5" y="30.5" textLength="8.5" lengthAdjust="spacingAndGlyphs" fill="#e0c000" stroke="#e0c000" stroke-width="0.35">intr</text>
<text x="1114.5" y="30.5" textLength="8.5" lengthAdjust="spacingAndGlyphs" fill="#20c0e0" stroke="#20c0e0" stroke-width="0.35">wait</text>
<text x="1124.5" y="30.5" textLength="8.5" lengthAdjust="spacingAndGlyphs" fill="#d020d0" stroke="#d020d0" stroke-width="0.35">idle</text>
<text x="1135.5" y="30.5" textLength="8.5" lengthAdjust="spacingAndGlyphs" fill="#30b030" stroke="#30b030" stroke-width="0.35">xxx</text>
<text x="1052" y="45.5" textLength="31" lengthAdjust="spacingAndGlyphs" fill="#111" stroke="#111" stroke-width="0.35">CPU 1 Usage</text>
<text x="1084" y="45.5" textLength="9" lengthAdjust="spacingAndGlyphs" fill="#2020d0" stroke="#2020d0" stroke-width="0.35">user</text>
<text x="1095.5" y="45.5" textLength="7.5" lengthAdjust="spacingAndGlyphs" fill="#d02020" stroke="#d02020" stroke-width="0.35">sys</text>
<text x="1104.5" y="45.5" textLength="8.5" lengthAdjust="spacingAndGlyphs" fill="#e0c000" stroke="#e0c000" stroke-width="0.35">intr</text>
<text x="1114.5" y="45.5" textLength="8.5" lengthAdjust="spacingAndGlyphs" fill="#20c0e0" stroke="#20c0e0" stroke-width="0.35">wait</text>
<text x="1124.5" y="45.5" textLength="8.5" lengthAdjust="spacingAndGlyphs" fill="#d020d0" stroke="#d020d0" stroke-width="0.35">idle</text>
<text x="1135.5" y="45.5" textLength="8.5" lengthAdjust="spacingAndGlyphs" fill="#30b030" stroke="#30b030" stroke-width="0.35">xxx</text>
<text x="1052" y="60.5" textLength="31" lengthAdjust="spacingAndGlyphs" fill="#111" stroke="#111" stroke-width="0.35">CPU 2 Usage</text>
<text x="1084" y="60.5" textLength="9" lengthAdjust="spacingAndGlyphs" fill="#2020d0" stroke="#2020d0" stroke-width="0.35">user</text>
<text x="1095.5" y="60.5" textLength="7.5" lengthAdjust="spacingAndGlyphs" fill="#d02020" stroke="#d02020" stroke-width="0.35">sys</text>
<text x="1104.5" y="60.5" textLength="8.5" lengthAdjust="spacingAndGlyphs" fill="#e0c000" stroke="#e0c000" stroke-width="0.35">intr</text>
<text x="1114.5" y="60.5" textLength="8.5" lengthAdjust="spacingAndGlyphs" fill="#20c0e0" stroke="#20c0e0" stroke-width="0.35">wait</text>
<text x="1124.5" y="60.5" textLength="8.5" lengthAdjust="spacingAndGlyphs" fill="#d020d0" stroke="#d020d0" stroke-width="0.35">idle</text>
<text x="1135.5" y="60.5" textLength="8.5" lengthAdjust="spacingAndGlyphs" fill="#30b030" stroke="#30b030" stroke-width="0.35">xxx</text>
<text x="1052" y="75.5" textLength="31" lengthAdjust="spacingAndGlyphs" fill="#111" stroke="#111" stroke-width="0.35">CPU 3 Usage</text>
<text x="1084" y="75.5" textLength="9" lengthAdjust="spacingAndGlyphs" fill="#2020d0" stroke="#2020d0" stroke-width="0.35">user</text>
<text x="1095.5" y="75.5" textLength="7.5" lengthAdjust="spacingAndGlyphs" fill="#d02020" stroke="#d02020" stroke-width="0.35">sys</text>
<text x="1104.5" y="75.5" textLength="8.5" lengthAdjust="spacingAndGlyphs" fill="#e0c000" stroke="#e0c000" stroke-width="0.35">intr</text>
<text x="1114.5" y="75.5" textLength="8.5" lengthAdjust="spacingAndGlyphs" fill="#20c0e0" stroke="#20c0e0" stroke-width="0.35">wait</text>
<text x="1124.5" y="75.5" textLength="8.5" lengthAdjust="spacingAndGlyphs" fill="#d020d0" stroke="#d020d0" stroke-width="0.35">idle</text>
<text x="1135.5" y="75.5" textLength="8.5" lengthAdjust="spacingAndGlyphs" fill="#30b030" stroke="#30b030" stroke-width="0.35">xxx</text>
<text x="1052" y="89.5" textLength="20" lengthAdjust="spacingAndGlyphs" fill="#111" stroke="#111" stroke-width="0.35">Memory:</text>
<text x="1075.5" y="89.5" textLength="14.5" lengthAdjust="spacingAndGlyphs" fill="#2020d0" stroke="#2020d0" stroke-width="0.35">kernel</text>
<text x="1092" y="89.5" textLength="11" lengthAdjust="spacingAndGlyphs" fill="#20c0e0" stroke="#20c0e0" stroke-width="0.35">fs ctl</text>
<text x="1106.5" y="89.5" textLength="14.5" lengthAdjust="spacingAndGlyphs" fill="#d02020" stroke="#d02020" stroke-width="0.35">fs/buf</text>
<text x="1123" y="89.5" textLength="16" lengthAdjust="spacingAndGlyphs" fill="#d020d0" stroke="#d020d0" stroke-width="0.35">delay</text>
<text x="1141" y="89.5" textLength="9" lengthAdjust="spacingAndGlyphs" fill="#30b030" stroke="#30b030" stroke-width="0.35">free</text>
<text x="1152" y="89.5" textLength="9" lengthAdjust="spacingAndGlyphs" fill="#2020d0" stroke="#2020d0" stroke-width="0.35">user</text>
<text x="1052" y="103.5" textLength="26" lengthAdjust="spacingAndGlyphs" fill="#111" stroke="#111" stroke-width="0.35">CPU Wait</text>
<text x="1079" y="103.5" textLength="4" lengthAdjust="spacingAndGlyphs" fill="#2020d0" stroke="#2020d0" stroke-width="0.35">io</text>
<text x="1084" y="103.5" textLength="10" lengthAdjust="spacingAndGlyphs" fill="#e0c000" stroke="#e0c000" stroke-width="0.35">swap</text>
<text x="1095.5" y="103.5" textLength="6.5" lengthAdjust="spacingAndGlyphs" fill="#20c0e0" stroke="#20c0e0" stroke-width="0.35">pio</text>
<text x="1052" y="118.5" textLength="32" lengthAdjust="spacingAndGlyphs" fill="#111" stroke="#111" stroke-width="0.35">Syscall/0.2sec</text>
<text x="1085" y="118.5" textLength="14" lengthAdjust="spacingAndGlyphs" fill="#2020d0" stroke="#2020d0" stroke-width="0.35">syscll</text>
<text x="1101" y="118.5" textLength="17" lengthAdjust="spacingAndGlyphs" fill="#20c0e0" stroke="#20c0e0" stroke-width="0.35">context</text>
<text x="1120" y="118.5" textLength="9" lengthAdjust="spacingAndGlyphs" fill="#d02020" stroke="#d02020" stroke-width="0.35">fork</text>
<text x="1131" y="118.5" textLength="10" lengthAdjust="spacingAndGlyphs" fill="#e0c000" stroke="#e0c000" stroke-width="0.35">exec</text>
<text x="1144" y="118.5" textLength="10" lengthAdjust="spacingAndGlyphs" fill="#d020d0" stroke="#d020d0" stroke-width="0.35">rept</text>
<text x="1052" y="132.5" textLength="24.5" lengthAdjust="spacingAndGlyphs" fill="#111" stroke="#111" stroke-width="0.35">Gfx/0.2sec</text>
<text x="1078" y="132.5" textLength="7.5" lengthAdjust="spacingAndGlyphs" fill="#2020d0" stroke="#2020d0" stroke-width="0.35">intr</text>
<text x="1089" y="132.5" textLength="14" lengthAdjust="spacingAndGlyphs" fill="#20c0e0" stroke="#20c0e0" stroke-width="0.35">swapbf</text>
<text x="1105.5" y="132.5" textLength="11.0" lengthAdjust="spacingAndGlyphs" fill="#d02020" stroke="#d02020" stroke-width="0.35">fifo</text>
<text x="1119" y="132.5" textLength="10" lengthAdjust="spacingAndGlyphs" fill="#e0c000" stroke="#e0c000" stroke-width="0.35">swap</text>
<text x="1133" y="132.5" textLength="9" lengthAdjust="spacingAndGlyphs" fill="#d020d0" stroke="#d020d0" stroke-width="0.35">fcap</text>
<text x="1146.5" y="132.5" textLength="16.5" lengthAdjust="spacingAndGlyphs" fill="#30b030" stroke="#30b030" stroke-width="0.35">ctxsw</text>
<text x="1176" y="118.5" textLength="13" lengthAdjust="spacingAndGlyphs" fill="#111" stroke="#111" stroke-width="0.35">2000</text><text x="1178" y="132.5" textLength="10" lengthAdjust="spacingAndGlyphs" fill="#111" stroke="#111" stroke-width="0.35">200</text>
</g>
<rect x="1174" y="86" width="13" height="3" fill="#ddd" shape-rendering="crispEdges"/><rect x="1176" y="89" width="11" height="3" fill="#c00" shape-rendering="crispEdges"/><rect x="1175" y="95" width="12" height="4" fill="#3030d0" shape-rendering="crispEdges"/>
</svg>
<!-- media recorder -->
<div class="a" style="left:1046px;top:154px;width:149px;height:110px;background:#173449;border:1px solid #0c1c28"></div>
<div class="a" style="left:1047px;top:155px;width:147px;height:108px;border:1px solid #5a7e96"></div>
<div class="a" style="left:1050px;top:159px;width:140px;height:15px;background:#1b4561;border-top:1px solid #7098b0;border-bottom:1px solid #0c1e2c"></div>
<div class="a" style="left:1065px;top:159px;width:1px;height:14px;background:#7098b0"></div>
<div class="a" style="left:1160px;top:159px;width:1px;height:14px;background:#7098b0"></div>
<div class="a" style="left:1176px;top:159px;width:1px;height:14px;background:#7098b0"></div>
<div class="a" style="left:1053px;top:165px;width:10px;height:2px;background:#0e2434"></div>
<div class="a" style="left:1166px;top:165px;width:3px;height:3px;background:#0e2434"></div>
<div class="a" style="left:1179px;top:161px;width:9px;height:10px;border:1px solid #0e2434"></div>
<div class="t" style="left:1072px;top:160.5px;font-size:10px;font-style:italic;color:#f2f8fc;-webkit-text-stroke:0.3px #dfeaf2">Media Recorder</div>
<div class="a" style="left:1050px;top:174px;width:140px;height:31px;border-left:1px solid #7098b0;border-bottom:1px solid #0c1e2c;background:#173449"></div>
<div class="a" style="left:1050px;top:205px;width:140px;height:1px;background:#4a6a80"></div>
<div class="t mm" style="left:1059px;top:177px">File</div>
<div class="t mm" style="left:1088px;top:177px">Edit</div>
<div class="t mm" style="left:1118px;top:177px">Tasks</div>
<div class="t mm" style="left:1157px;top:177px">Options</div>
<div class="t mm" style="left:1165px;top:192px">Help</div>
<div class="t" style="left:1055px;top:209.5px;font-size:7.2px;letter-spacing:-0.33px;font-weight:bold;color:#e8eef2">Choose Media and Source:</div>
<svg class="a" style="left:1046px;top:205px" width="149" height="58" viewBox="1046 205 149 58">
<circle cx="1153" cy="212" r="3.5" fill="#e8e8e8"/><path d="M1153 208v4" stroke="#222" stroke-width="1"/>
<g shape-rendering="crispEdges">
<rect x="1055" y="222" width="19" height="18" fill="#4a5a66"/><rect x="1056" y="223" width="17" height="16" fill="#3a4650"/>
<rect x="1057" y="225" width="16" height="13" fill="#111"/><rect x="1058" y="227" width="4" height="9" fill="#fff"/><rect x="1063" y="227" width="4" height="9" fill="#fff"/><rect x="1068" y="227" width="4" height="9" fill="#fff"/>
<rect x="1079" y="222" width="19" height="18" fill="#5a6a76"/><rect x="1080" y="223" width="17" height="16" fill="#3a4650"/>
<rect x="1103" y="222" width="19" height="18" fill="#5a6a76"/><rect x="1104" y="223" width="17" height="16" fill="#3a4650"/>
<rect x="1105" y="224" width="14" height="14" fill="#e8e020"/>
<rect x="1125" y="222" width="18" height="18" fill="#2a3a46"/><rect x="1126" y="223" width="16" height="16" fill="#1a2a36"/>
<rect x="1145" y="222" width="18" height="18" fill="#2a3a46"/><rect x="1146" y="223" width="16" height="16" fill="#1a2a36"/>
<rect x="1166" y="222" width="19" height="18" fill="#2a3a46"/><rect x="1167" y="223" width="17" height="16" fill="#1a2a36"/>
</g>
<circle cx="1088.5" cy="231" r="7" fill="#f0f0f0"/><path d="M1089.5 225v7l2 1" stroke="#111" stroke-width="1.4" fill="none"/><circle cx="1088" cy="233.5" r="2" fill="#111"/>
<path d="M1109 229l3-2 3 2-1 4-4 1z" fill="#222" opacity="0.6"/>
<path d="M1131 227l7 4-7 4z" fill="#0e1a24"/>
<circle cx="1154" cy="231" r="3.5" fill="#d01010"/>
<path d="M1172 227l6 3-6 3zM1170 236h11" fill="#0e1a24" stroke="#3a4a56" stroke-width="1"/>
</svg>
<div class="t" style="left:1055px;top:249px;font-size:6.8px;color:#c8d4dc">Media:</div>
<div class="t" style="left:1077px;top:249px;font-size:6.8px;font-weight:bold;color:#e8eef2">Image</div>
<div class="t" style="left:1104px;top:249px;font-size:6.8px;color:#c8d4dc">Source:</div>
<div class="t" style="left:1129px;top:249px;font-size:6.8px;font-weight:bold;color:#e8eef2;width:61px;overflow:hidden">Screen using Software</div>
<!-- bottom window -->
<div class="a" style="left:1041px;top:520px;width:154px;height:149px;background:#173449;border-top:1px solid #7098b0;border-right:1px solid #0c1c28;border-bottom:1px solid #0c1c28"></div>
<div class="a" style="left:1041px;top:521px;width:153px;height:147px;border-top:1px solid #0c1c28;border-right:1px solid #5a7e96;border-bottom:1px solid #7098b0"></div>
<div class="a" style="left:1041px;top:524px;width:149px;height:15px;background:#1b4561;border-top:1px solid #7098b0;border-bottom:1px solid #0c1e2c"></div>
<div class="a" style="left:1159px;top:524px;width:1px;height:14px;background:#7098b0"></div>
<div class="a" style="left:1174px;top:524px;width:1px;height:14px;background:#7098b0"></div>
<div class="a" style="left:1164px;top:530px;width:3px;height:3px;background:#0e2434"></div>
<div class="a" style="left:1177px;top:526px;width:9px;height:10px;border:1px solid #0e2434"></div>
<div class="a" style="left:1041px;top:539px;width:149px;height:1px;background:#7098b0"></div>
<div class="a" style="left:1041px;top:540px;width:149px;height:15px;background:#1c3a48"></div>
<div class="t mm" style="left:1165px;top:542px">Help</div>
<div class="a" style="left:1041px;top:555px;width:149px;height:1px;background:#0c1c28"></div>
<div class="a" style="left:1041px;top:556px;width:135px;height:65px;background:#141f5a"></div>
<div class="a" style="left:1176px;top:556px;width:12px;height:65px;background:#1c3a4c;border-left:1px solid #3a5a6e"></div>
<div class="a" style="left:1177px;top:557px;width:11px;height:11px;border:1px solid #3a5a6e"></div>
<div class="a" style="left:1177px;top:609px;width:11px;height:11px;border:1px solid #3a5a6e"></div>
<div class="a" style="left:1041px;top:621px;width:147px;height:11px;background:#1c3a4c;border-top:1px solid #3a5a6e"></div>
<div class="a" style="left:1164px;top:622px;width:12px;height:10px;border:1px solid #3a5a6e"></div>
<div class="a" style="left:1176px;top:622px;width:12px;height:10px;border:1px solid #3a5a6e"></div>
<div class="a" style="left:1041px;top:633px;width:149px;height:1px;background:#6a8aa0"></div>
<svg class="a" style="left:1041px;top:634px" width="149" height="16" viewBox="1041 634 149 16"><path d="M1041 634h16l8 14h-24zM1065 648l-8-14h65l-4 14z" fill="#1a3442" stroke="#0e1e2a" stroke-width="1"/></svg>
<div class="t" style="left:1041px;top:637px;font-size:8px;font-weight:bold;color:#e8eef2">s95</div>
<div class="t" style="left:1070px;top:637px;font-size:8px;font-weight:bold;color:#e8eef2">Windows_3.11</div>

<!-- /desk -->
</body></html>
